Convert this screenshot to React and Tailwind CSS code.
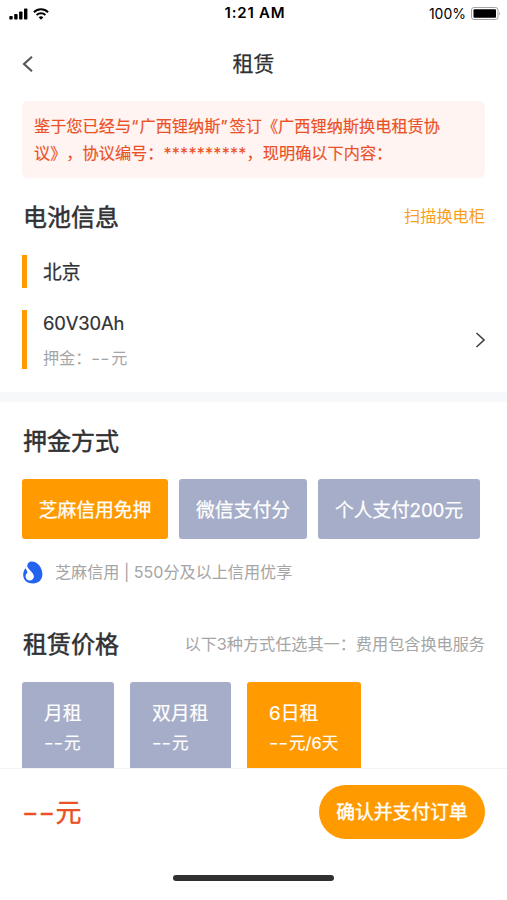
const deposits = [
  { label: '芝麻信用免押', box: 'w-[146px] bg-[#ff9b00]' },
  { label: '微信支付分', box: 'w-[128px] bg-[#a5adc8]' },
  { label: '个人支付200元', box: 'w-[162px] bg-[#a5adc8] tracking-[-0.15px]' },
]

const plans = [
  { name: '月租', suffix: '元', box: 'w-[92px] bg-[#a5adc8]' },
  { name: '双月租', suffix: '元', box: 'w-[101px] bg-[#a5adc8]' },
  { name: '6日租', suffix: '元/6天', box: 'w-[114px] bg-[#ff9b00]' },
]

function Dashes({ className, stretch = 'scale-x-125' }) {
  return (
    <span className={`inline-block shrink-0 tracking-normal ${className}`}>
      <span className={`inline-block origin-left ${stretch}`}>--</span>
    </span>
  )
}

function StatusBar() {
  return (
    <div className="flex h-[27px] items-center justify-between pl-[9px] pr-[6px] text-black">
      <div className="flex w-[90px] items-center gap-[5px]">
        <svg width="19" height="12" viewBox="0 0 19 12" fill="currentColor">
          <rect x="0.3" y="8" width="3.4" height="3.5" rx="0.8" />
          <rect x="5.2" y="6" width="3.4" height="5.5" rx="0.8" />
          <rect x="10.1" y="3.5" width="3.4" height="8" rx="0.8" />
          <rect x="15" y="0.5" width="3.4" height="11" rx="0.8" />
        </svg>
        <svg width="16" height="12" viewBox="0 0 16 12" fill="none" stroke="currentColor" strokeWidth="1.9">
          <path d="M0.9 4.2a10.2 10.2 0 0 1 14.2 0" />
          <path d="M3.6 7a6.4 6.4 0 0 1 8.8 0" />
          <path d="M8 11.7 5.7 9.3a3.3 3.3 0 0 1 4.6 0z" fill="currentColor" stroke="none" />
        </svg>
      </div>
      <p className="-mt-px text-[15px] leading-5 font-semibold tracking-[0.8px]">1:21 AM</p>
      <div className="flex w-[90px] items-center justify-end gap-[5px]">
        <span className="text-[14px]">100%</span>
        <svg width="30" height="13" viewBox="0 0 30 13">
          <rect x="0.5" y="0.5" width="26.5" height="12" rx="2.5" fill="none" stroke="#a3a3a3" />
          <rect x="2.5" y="2.2" width="22.5" height="8.6" rx="1" fill="#000" />
          <path d="M28.3 4.5q1.6 2 0 4z" fill="#a3a3a3" />
        </svg>
      </div>
    </div>
  )
}

function SesameIcon() {
  return (
    <svg width="21" height="23" viewBox="0 0 21 23">
      <path
        d="M9.6 0.4C15.2 0.2 20.4 6.4 20.4 13C20.4 18.8 16.4 22.5 11 22.5C5.4 22.5 1.2 19 1.2 14C1.2 11 2 8.9 3.6 7.2L5.2 4.4C5.4 2 7.2 0.5 9.6 0.4Z"
        fill="#2463f0"
      />
      <path
        d="M5.2 4C4.8 8.2 11.9 11.2 11.9 15.6C11.9 17.9 10.1 19.6 7.7 19.6C5.3 19.6 3.6 17.9 3.6 15.6C3.6 13.9 4.5 12.7 5.5 11.8C5.2 9.8 4.4 8.6 3.4 7.2Z"
        fill="#fff"
      />
    </svg>
  )
}

export default function App() {
  return (
    <main className="flex h-[900px] w-[507px] flex-col overflow-hidden bg-white font-[Inter,'Noto_Sans_CJK_SC',sans-serif] text-[16.1px] text-[#303133] [text-spacing-trim:space-all]">
      <StatusBar />
      <header className="flex h-[74px] items-center justify-between px-[22px]">
        <svg width="12" height="16" viewBox="0 0 12 16" fill="none" stroke="#555" strokeWidth="2.1">
          <path d="M10 0.8 2 8 10 15.2" />
        </svg>
        <h1 className="text-[21px] leading-6 [-webkit-text-stroke:0.25px]">租赁</h1>
        <div className="w-3" />
      </header>

      <div className="mx-[22px] h-[77px] rounded-md bg-[#fff4f1] px-[12px] pt-[12px] text-[16.2px] leading-[27px] text-[#ea5127] [-webkit-text-stroke:0.15px]">
        <p className="whitespace-nowrap">
          鉴于您已经与<span className="tracking-[1.2px]">“</span>广西锂纳斯<span className="tracking-[2px]">”</span>
          签订《广西锂纳斯换电租赁协
        </p>
        <p className="whitespace-nowrap">
          议》，协议编号：<span className="tracking-[0.2px] [-webkit-text-stroke:0px]">**********</span>，现明确以下内容：
        </p>
      </div>

      <section className="px-[22px]">
        <div className="flex h-[77px] items-center justify-between pl-px">
          <h2 className="pt-[2px] text-[24px] [-webkit-text-stroke:0.5px]">电池信息</h2>
          <a className="text-[16.2px] text-[#f9a01b]">扫描换电柜</a>
        </div>
        <div className="flex h-[33px] items-center border-l-5 border-[#ff9b00] pt-[3px] pl-4 text-[18.8px] [-webkit-text-stroke:0.25px]">
          北京
        </div>
        <div className="mt-[22px] flex h-[59px] items-center justify-between border-l-5 border-[#ff9b00] pl-4">
          <div>
            <p className="text-[18.4px] leading-[27px] tracking-[-0.1px] [-webkit-text-stroke:0.2px]">60V30Ah</p>
            <p className="mt-[9px] flex leading-6 text-[#a5a5a5]">
              押金：
              <Dashes className="w-[20px]" />元
            </p>
          </div>
          <svg width="10" height="16" viewBox="0 0 10 16" fill="none" stroke="#444" strokeWidth="1.6">
            <path d="M1.5 1 9 8 1.5 15" />
          </svg>
        </div>
      </section>

      <div className="mt-[23px] h-[10px] shrink-0 bg-[#f6f8f9]" />

      <section className="px-[22px]">
        <h2 className="flex h-[77px] items-center pt-[3px] pl-px text-[24px] [-webkit-text-stroke:0.5px]">押金方式</h2>
        <div className="flex gap-[11px]">
          {deposits.map((d) => (
            <button
              key={d.label}
              className={`h-[60px] rounded-[3px] pt-[4px] text-[18.8px] whitespace-nowrap text-white [-webkit-text-stroke:0.25px] ${d.box}`}
            >
              {d.label}
            </button>
          ))}
        </div>
        <div className="mt-[21px] flex h-6 items-center gap-[12px] text-[#a5a5a5]">
          <SesameIcon />
          <p>芝麻信用 | 550分及以上信用优享</p>
        </div>
      </section>

      <section className="mt-[22px] h-[162px] shrink-0 overflow-hidden px-[22px]">
        <div className="flex h-[76px] items-center justify-between pt-px pl-px">
          <h2 className="pt-px text-[24px] [-webkit-text-stroke:0.5px]">租赁价格</h2>
          <p className="text-[16.15px] text-[#a5a5a5]">以下3种方式任选其一：费用包含换电服务</p>
        </div>
        <div className="flex gap-4">
          {plans.map((p) => (
            <div
              key={p.name}
              className={`h-[100px] rounded-[3px] pt-[18px] pl-[22px] text-white [-webkit-text-stroke:0.2px] ${p.box}`}
            >
              <p className="text-[18.8px] leading-[28px]">{p.name}</p>
              <p className="mt-px flex text-[16.5px] leading-[28px] whitespace-nowrap">
                <Dashes className="w-[20px]" />
                {p.suffix}
              </p>
            </div>
          ))}
        </div>
      </section>

      <footer className="relative flex h-[132px] shrink-0 flex-col border-t border-[#f3f3f3] bg-white px-[22px]">
        <div className="mt-4 flex h-[54px] items-center justify-between">
          <p className="flex text-[26px] text-[#ea5127] [-webkit-text-stroke:0.4px]">
            <Dashes className="w-[33.5px]" stretch="scale-x-138" />元
          </p>
          <button className="h-[54px] w-[166px] rounded-full bg-[#ff9b00] pt-[3px] text-[18.8px] text-white [-webkit-text-stroke:0.4px]">
            确认并支付订单
          </button>
        </div>
        <div className="mx-auto mt-9 h-[6px] w-[161px] rounded-full bg-[#303030]" />
      </footer>
    </main>
  )
}
